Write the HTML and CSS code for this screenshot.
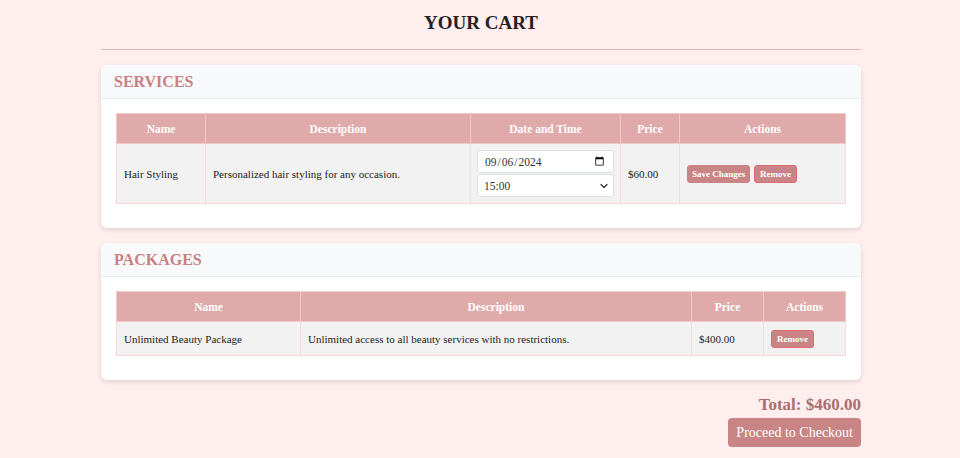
FILE: index.html
```html
<!DOCTYPE html>
<html>
<head>
<meta charset="utf-8">
<link rel="stylesheet" href="styles.css">
</head>
<body>
<div class="container">
  <h1 class="title">YOUR CART</h1>
  <hr class="rule">
  <section class="card">
    <div class="card-header"><h2>SERVICES</h2></div>
    <div class="card-body">
      <table class="cart-table services">
        <thead>
          <tr><th class="c-name">Name</th><th class="c-desc">Description</th><th class="c-date">Date and Time</th><th class="c-price">Price</th><th>Actions</th></tr>
        </thead>
        <tbody>
          <tr>
            <td>Hair Styling</td>
            <td>Personalized hair styling for any occasion.</td>
            <td class="dt">
              <input class="field" type="date" value="2024-09-06">
              <div class="select-wrap">
                <select class="field select"><option>15:00</option></select>
                <svg class="chev" width="8" height="6" viewBox="0 0 8 6"><path d="M1 1.5 L4 4.5 L7 1.5" fill="none" stroke="#343a40" stroke-width="1.3" stroke-linecap="round" stroke-linejoin="round"/></svg>
              </div>
            </td>
            <td>$60.00</td>
            <td><button class="btn">Save Changes</button> <button class="btn btn-remove">Remove</button></td>
          </tr>
        </tbody>
      </table>
    </div>
  </section>
  <section class="card">
    <div class="card-header"><h2>PACKAGES</h2></div>
    <div class="card-body">
      <table class="cart-table packages">
        <thead>
          <tr><th class="p-name">Name</th><th>Description</th><th class="p-price">Price</th><th class="p-act">Actions</th></tr>
        </thead>
        <tbody>
          <tr>
            <td>Unlimited Beauty Package</td>
            <td>Unlimited access to all beauty services with no restrictions.</td>
            <td>$400.00</td>
            <td><button class="btn btn-remove">Remove</button></td>
          </tr>
        </tbody>
      </table>
    </div>
  </section>
  <div class="summary">
    <div class="total">Total: $460.00</div>
    <button class="checkout">Proceed to Checkout</button>
  </div>
</div>
</body>
</html>
```
FILE: styles.css
```css
* { box-sizing: border-box; }
html, body { margin: 0; padding: 0; }
body {
  background: #ffeeee;
  font-family: "Liberation Serif", "Times New Roman", serif;
  color: #222;
  padding-left: 2px;
}
.container {
  width: 760px;
  margin: 0 auto;
  padding-top: 11px;
}
.title {
  margin: 0;
  text-align: center;
  font-size: 19px;
  line-height: 24px;
  font-weight: bold;
  color: #222;
}
.rule {
  border: 0;
  border-top: 1px solid #e6b9b9;
  margin: 14px 0 15px;
}
.card {
  background: #fff;
  border-radius: 6px;
  box-shadow: 0 2px 5px rgba(0,0,0,0.12);
  margin-bottom: 15px;
  overflow: hidden;
}
.card-header {
  background: #f8f9fa;
  border-bottom: 1px solid #e9ecef;
  height: 34px;
  padding: 0 13px;
  display: flex;
  align-items: center;
}
.card-header h2 {
  margin: 0;
  font-size: 16px;
  font-weight: bold;
  color: #c98080;
}
.card-body { padding: 14px 15px 24px; }
.cart-table {
  width: 100%;
  border-collapse: collapse;
  font-size: 11px;
}
.cart-table th {
  background: #e0aaaa;
  color: #fff;
  font-weight: bold;
  height: 30px;
  font-size: 11.5px;
  border: 1px solid #f3c9c9;
  text-align: center;
}
.cart-table td {
  background: #f2f2f2;
  border: 1px solid #f8d7d7;
  padding: 0 7px;
  color: #222;
}
.services td { height: 60px; }
.packages td { height: 34px; }
.c-name { width: 89px; }
.c-desc { width: 265px; }
.c-date { width: 150px; }
.c-price { width: 59px; }
.p-name { width: 184px; }
.p-price { width: 72px; }
.p-act { width: 82px; }
.cart-table td.dt { padding: 0 6px; }
.field {
  display: block;
  width: 137px;
  height: 23px;
  margin: 1px 0;
  border: 1px solid #dee2e6;
  border-radius: 3px;
  background: #fff;
  font-family: "Liberation Serif", serif;
  font-size: 11.5px;
  color: #333;
  padding: 0 6px;
}
.select-wrap { position: relative; }
.select {
  appearance: none;
  -webkit-appearance: none;
}
.chev {
  position: absolute;
  right: 6px;
  top: 9px;
  pointer-events: none;
}
.btn {
  font-family: "Liberation Serif", serif;
  font-size: 9px;
  font-weight: bold;
  color: #fff;
  background: #c98585;
  border: 1px solid #c98585;
  border-radius: 3px;
  height: 18px;
  padding: 0 4px;
  margin-right: 1px;
}
.btn-remove { border-color: #e06a72; padding: 0 5px; }
.summary {
  display: flex;
  flex-direction: column;
  align-items: flex-end;
  padding-top: 0;
}
.total {
  font-size: 17px;
  font-weight: bold;
  color: #aa6e6e;
  line-height: 20px;
}
.checkout {
  margin-top: 3px;
  font-family: "Liberation Serif", serif;
  font-size: 14px;
  color: #fff;
  background: #c98585;
  border: 0;
  border-radius: 4px;
  height: 29px;
  padding: 0 8px;
}
```
